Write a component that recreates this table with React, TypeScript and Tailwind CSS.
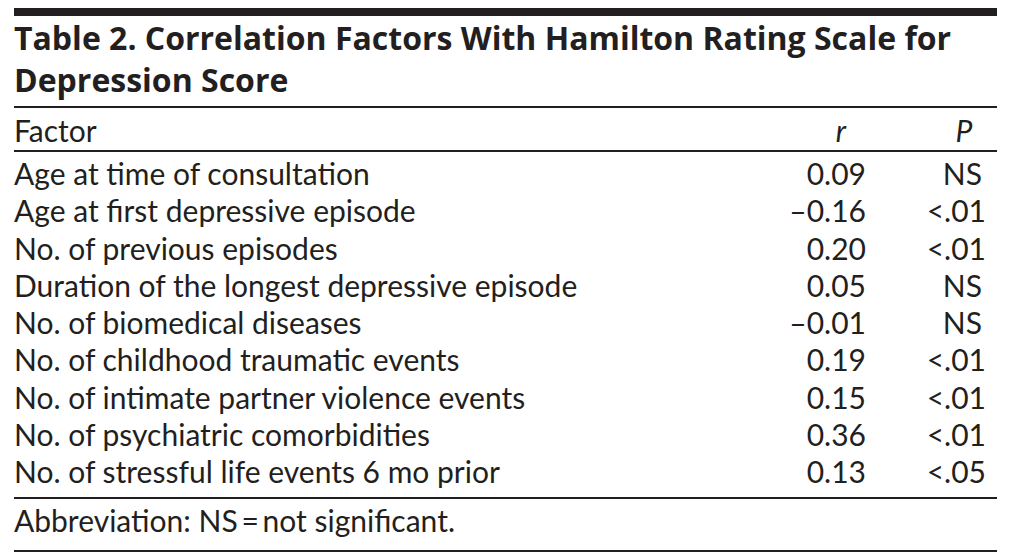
const rows = [
  { factor: 'Age at time of consultation', r: '0.09', p: 'NS' },
  { factor: 'Age at first depressive episode', r: '\u20130.16', p: '<.01' },
  { factor: 'No. of previous episodes', r: '0.20', p: '<.01' },
  { factor: 'Duration of the longest depressive episode', r: '0.05', p: 'NS' },
  { factor: 'No. of biomedical diseases', r: '\u20130.01', p: 'NS' },
  { factor: 'No. of childhood traumatic events', r: '0.19', p: '<.01' },
  { factor: 'No. of intimate partner violence events', r: '0.15', p: '<.01' },
  { factor: 'No. of psychiatric comorbidities', r: '0.36', p: '<.01' },
  { factor: 'No. of stressful life events 6 mo prior', r: '0.13', p: '<.05' },
];

export default function App() {
  return (
    <div className="w-[1011px] h-[559px] bg-white px-[14px] pt-[8px] text-[#231f20] font-['Lato',sans-serif] overflow-hidden">
      <div className="h-[8px] bg-[#231f20]" />

      {/* Title */}
      <h1 className="pt-[1px] pb-[5px] text-[32px] leading-[42px] font-bold font-['Open_Sans',sans-serif]">
        Table 2. Correlation Factors With Hamilton Rating Scale for
        <br />
        Depression Score
      </h1>

      {/* Header */}
      <div className="border-t-2 border-b-2 border-[#231f20] flex items-center h-[46px] pt-[2px] text-[30px]">
        <div className="flex-1">Factor</div>
        <div className="w-[40px] mr-[88px] text-center italic">r</div>
        <div className="w-[30px] mr-[18px] text-center italic">P</div>
      </div>

      {/* Body */}
      <div className="pt-[3px] pb-[7px] border-b-2 border-[#231f20] text-[30px]">
        {rows.map((row) => (
          <div key={row.factor} className="flex items-center h-[37.25px]">
            <div className="flex-1 whitespace-nowrap">{row.factor}</div>
            <div className="w-[100px] text-right">{row.r}</div>
            <div className={row.p === 'NS' ? 'w-[131px] text-right pr-[15px]' : 'w-[131px] text-right pr-[11px]'}>
              {row.p}
            </div>
          </div>
        ))}
      </div>

      {/* Footnote */}
      <div className="h-[53px] pt-[3px] border-b-2 border-[#231f20] text-[30px] leading-[36px]">
        Abbreviation: NS&thinsp;=&thinsp;not significant.
      </div>
    </div>
  );
}
